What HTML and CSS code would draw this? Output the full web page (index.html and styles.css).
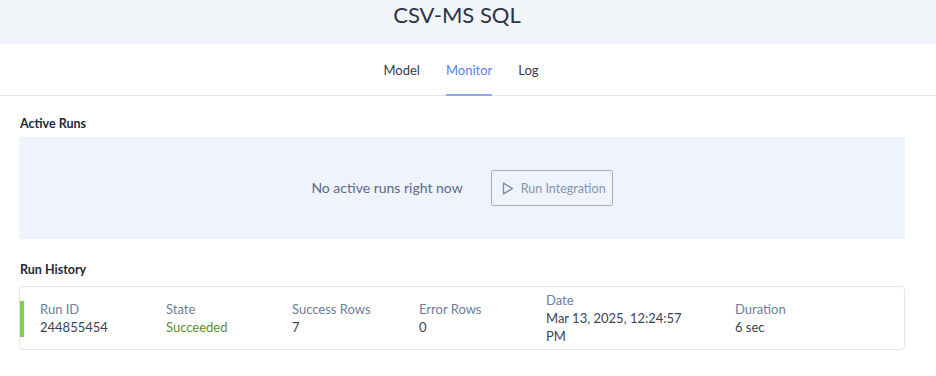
FILE: index.html
```html
<!DOCTYPE html>
<html lang="en">
<head>
    <meta charset="UTF-8">
    <title>CSV-MS SQL - Monitor</title>
    <link rel="stylesheet" href="styles.css">
</head>
<body>
<div class="header">
    <h1 class="title">CSV-MS SQL</h1>
</div>
<div class="tabs">
    <a class="tab">Model</a>
    <a class="tab active">Monitor</a>
    <a class="tab">Log</a>
</div>
<div class="content">
    <h3 class="section-title">Active Runs</h3>
    <div class="active-panel">
        <span class="empty-text">No active runs right now</span>
        <button class="run-btn">
            <svg width="12" height="13" viewBox="0 0 12 13"><path d="M1.5 1.2 L10.5 6.5 L1.5 11.8 Z" fill="none" stroke="#7d8ba6" stroke-width="1.4" stroke-linejoin="round"/></svg>
            Run Integration
        </button>
    </div>
    <h3 class="section-title history">Run History</h3>
    <div class="run-card">
        <div class="col">
            <div class="label">Run ID</div>
            <div class="value">244855454</div>
        </div>
        <div class="col">
            <div class="label">State</div>
            <div class="value ok">Succeeded</div>
        </div>
        <div class="col">
            <div class="label">Success Rows</div>
            <div class="value">7</div>
        </div>
        <div class="col">
            <div class="label">Error Rows</div>
            <div class="value">0</div>
        </div>
        <div class="col date">
            <div class="label">Date</div>
            <div class="value">Mar 13, 2025, 12:24:57 PM</div>
        </div>
        <div class="col">
            <div class="label">Duration</div>
            <div class="value">6 sec</div>
        </div>
    </div>
</div>
</body>
</html>
```

FILE: styles.css
```css
body {
    margin: 0;
    font-family: 'Lato', 'Open Sans', sans-serif;
    background: #fff;
    color: #333c4e;
}

.header {
    background-color: #f1f4f9;
    height: 44px;
    display: flex;
    justify-content: center;
    align-items: center;
}

.title {
    margin: 0;
    font-size: 22px;
    font-weight: 400;
    color: #2b3445;
    padding-right: 22px;
    position: relative;
    top: -8px;
}

.tabs {
    display: flex;
    justify-content: center;
    gap: 26px;
    height: 51px;
    border-bottom: 1px solid #e2e7f5;
    padding-right: 14px;
}

.tab {
    display: flex;
    align-items: center;
    font-size: 13px;
    color: #333c4e;
    padding-top: 1px;
    border-bottom: 2px solid transparent;
    margin-bottom: -1px;
    cursor: pointer;
}

.tab.active {
    color: #5b80f0;
    border-bottom-color: #8fa9ef;
}

.content {
    padding: 0 31px 0 19px;
}

.section-title {
    margin: 0;
    font-size: 12.5px;
    font-weight: 700;
    color: #222a38;
    padding: 20px 0 6px 1px;
}

.history {
    padding-top: 23px;
    padding-bottom: 9px;
}

.active-panel {
    background-color: #eef3fd;
    height: 102px;
    display: flex;
    justify-content: center;
    align-items: center;
    gap: 28px;
}

.empty-text {
    font-size: 14px;
    color: #5b6a86;
    padding-bottom: 2px;
}

.run-btn {
    display: flex;
    align-items: center;
    gap: 7px;
    height: 36px;
    padding: 0 6px 0 10px;
    background: transparent;
    border: 1px solid #a3b0c6;
    border-radius: 3px;
    font-family: inherit;
    font-size: 12.5px;
    color: #8794ab;
    cursor: pointer;
}

.run-card {
    display: grid;
    grid-template-columns: 126px 126px 127px 127px 189px 1fr;
    align-items: center;
    height: 62px;
    border: 1px solid #dfe6f1;
    border-radius: 4px;
    padding-left: 20px;
    position: relative;
}

.run-card::before {
    content: '';
    position: absolute;
    left: 0;
    top: 14px;
    width: 4px;
    height: 36px;
    background-color: #7dcc5c;
}

.col {
    font-size: 13px;
    line-height: 18px;
}

.col.date .value {
    max-width: 140px;
}

.label {
    color: #6b7ea0;
}

.value {
    color: #3a4354;
}

.value.ok {
    color: #5d8e2f;
}
```
